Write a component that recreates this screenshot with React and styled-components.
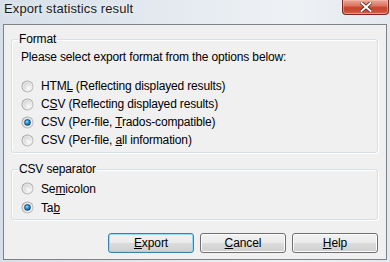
import React from "react";
import styled, { createGlobalStyle } from "styled-components";

const Global = createGlobalStyle`
  html, body { margin: 0; padding: 0; }
  body {
    width: 390px;
    height: 262px;
    overflow: hidden;
    font-family: "Liberation Sans", Arial, sans-serif;
    font-size: 12px;
    color: #000;
  }
`;

const Window = styled.div`
  width: 390px;
  height: 262px;
  box-sizing: border-box;
  display: flex;
  flex-direction: column;
  background: linear-gradient(90deg, #d6dfe9 0%, #e4eaf0 45%, #eef1f4 75%, #e3e9ef 100%);
`;

const TitleBar = styled.div`
  height: 24px;
  display: flex;
  justify-content: space-between;
  align-items: flex-start;
  padding: 0 1px 0 4px;
  flex: none;
`;

const Title = styled.div`
  font-family: "Liberation Sans", Arial, sans-serif;
  font-size: 13px;
  letter-spacing: 0.12px;
  line-height: 18px;
  color: #1b1b1b;
  text-shadow: 0 0 6px rgba(255, 255, 255, 0.9);
`;

const CloseButton = styled.div`
  width: 47px;
  height: 15px;
  box-sizing: border-box;
  border: 1px solid #7f2a1c;
  border-top: none;
  border-radius: 0 0 4px 4px;
  background: linear-gradient(180deg, #e9a899 0%, #dc7662 40%, #c7442c 55%, #c9533b 85%, #d9785f 100%);
  box-shadow: inset 0 0 0 1px rgba(255, 200, 190, 0.45);
  display: flex;
  align-items: center;
  justify-content: center;
`;

const Client = styled.div`
  margin: 0 3px 2px 3px;
  flex: 1;
  border: 1px solid #7d8287;
  background: #f0f0f0;
  padding: 14px 8px 6px 7px;
  display: flex;
  flex-direction: column;
`;

const Group = styled.div`
  position: relative;
  border: 1px solid #d5dfe5;
  border-radius: 3px;
  box-shadow: inset 1px 1px 0 #fff, 1px 1px 0 #fff;
  padding: ${(p) => p.$pad};
  margin-top: ${(p) => p.$mt || 0}px;
  display: flex;
  flex-direction: column;
`;

const Legend = styled.span`
  position: absolute;
  left: 6px;
  top: -8px;
  padding: 0 1px;
  background: #f0f0f0;
  line-height: 14px;
  letter-spacing: -0.15px;
`;

const Instruction = styled.div`
  line-height: 14px;
  letter-spacing: -0.15px;
  margin-bottom: 13px;
`;

const OptionRow = styled.label`
  display: flex;
  align-items: center;
  height: ${(p) => p.$h}px;
  gap: 7px;
  letter-spacing: -0.15px;
  line-height: 14px;
`;

const Buttons = styled.div`
  display: flex;
  justify-content: flex-end;
  gap: 6px;
  margin-top: 13px;
`;

const Button = styled.div`
  width: 86px;
  height: 20px;
  box-sizing: border-box;
  border: 1px solid ${(p) => (p.$default ? "#3c7fb1" : "#707070")};
  border-radius: 3px;
  background: linear-gradient(180deg, #f2f2f2 0%, #ebebeb 49%, #dddddd 50%, #cfcfcf 100%);
  box-shadow: inset 0 0 0 1px ${(p) => (p.$default ? "#8fdcf5" : "#fcfcfc")};
  display: flex;
  align-items: center;
  justify-content: center;
  letter-spacing: -0.1px;
  line-height: 14px;
`;

const Radio = ({ checked }) => (
  <svg width="13" height="13" viewBox="0 0 13 13" style={{ flex: "none" }}>
    <defs>
      <linearGradient id="rring" x1="0" y1="0" x2="1" y2="1">
        <stop offset="0" stopColor="#9a9a9a" />
        <stop offset="1" stopColor="#c4c4c4" />
      </linearGradient>
      <radialGradient id="rfill" cx="0.65" cy="0.7" r="0.75">
        <stop offset="0" stopColor="#fbfbfb" />
        <stop offset="1" stopColor="#d4d4d4" />
      </radialGradient>
      <radialGradient id="rdot" cx="0.4" cy="0.35" r="0.7">
        <stop offset="0" stopColor="#9fe3ff" />
        <stop offset="0.45" stopColor="#2d9be0" />
        <stop offset="1" stopColor="#0d4a7a" />
      </radialGradient>
    </defs>
    <circle cx="6.5" cy="6.5" r="6" fill="url(#rring)" />
    <circle cx="6.5" cy="6.5" r="5" fill="#f4f4f4" />
    <circle cx="6.5" cy="6.5" r="4.2" fill="url(#rfill)" />
    {checked && (
      <>
        <circle cx="6.5" cy="6.5" r="3.2" fill="#17426a" />
        <circle cx="6.5" cy="6.5" r="2.6" fill="url(#rdot)" />
      </>
    )}
  </svg>
);

const Option = ({ checked, h = 18, children }) => (
  <OptionRow $h={h}>
    <Radio checked={checked} />
    <span>{children}</span>
  </OptionRow>
);

export default function App() {
  return (
    <>
      <Global />
      <Window>
        <TitleBar>
          <Title>Export statistics result</Title>
          <CloseButton>
            <svg width="12" height="10" viewBox="0 0 12 10">
              <path d="M1.5 1 L10.5 9 M10.5 1 L1.5 9" stroke="#5a2016" strokeWidth="3.6" strokeLinecap="square" />
              <path d="M1.5 1 L10.5 9 M10.5 1 L1.5 9" stroke="#ffffff" strokeWidth="2" strokeLinecap="square" />
            </svg>
          </CloseButton>
        </TitleBar>
        <Client>
          <Group $pad="10px 9px 3px 9px">
            <Legend>Format</Legend>
            <Instruction>Please select export format from the options below:</Instruction>
            <Option>HTM<u>L</u> (Reflecting displayed results)</Option>
            <Option>C<u>S</u>V (Reflecting displayed results)</Option>
            <Option checked>CSV (Per-file, <u>T</u>rados-compatible)</Option>
            <Option>CSV (Per-file, <u>a</u>ll information)</Option>
          </Group>
          <Group $pad="9px 9px 2px 9px" $mt={16}>
            <Legend>CSV separator</Legend>
            <Option h={19}>Se<u>m</u>icolon</Option>
            <Option h={19} checked>Ta<u>b</u></Option>
          </Group>
          <Buttons>
            <Button $default><span><u>E</u>xport</span></Button>
            <Button><span><u>C</u>ancel</span></Button>
            <Button><span><u>H</u>elp</span></Button>
          </Buttons>
        </Client>
      </Window>
    </>
  );
}
